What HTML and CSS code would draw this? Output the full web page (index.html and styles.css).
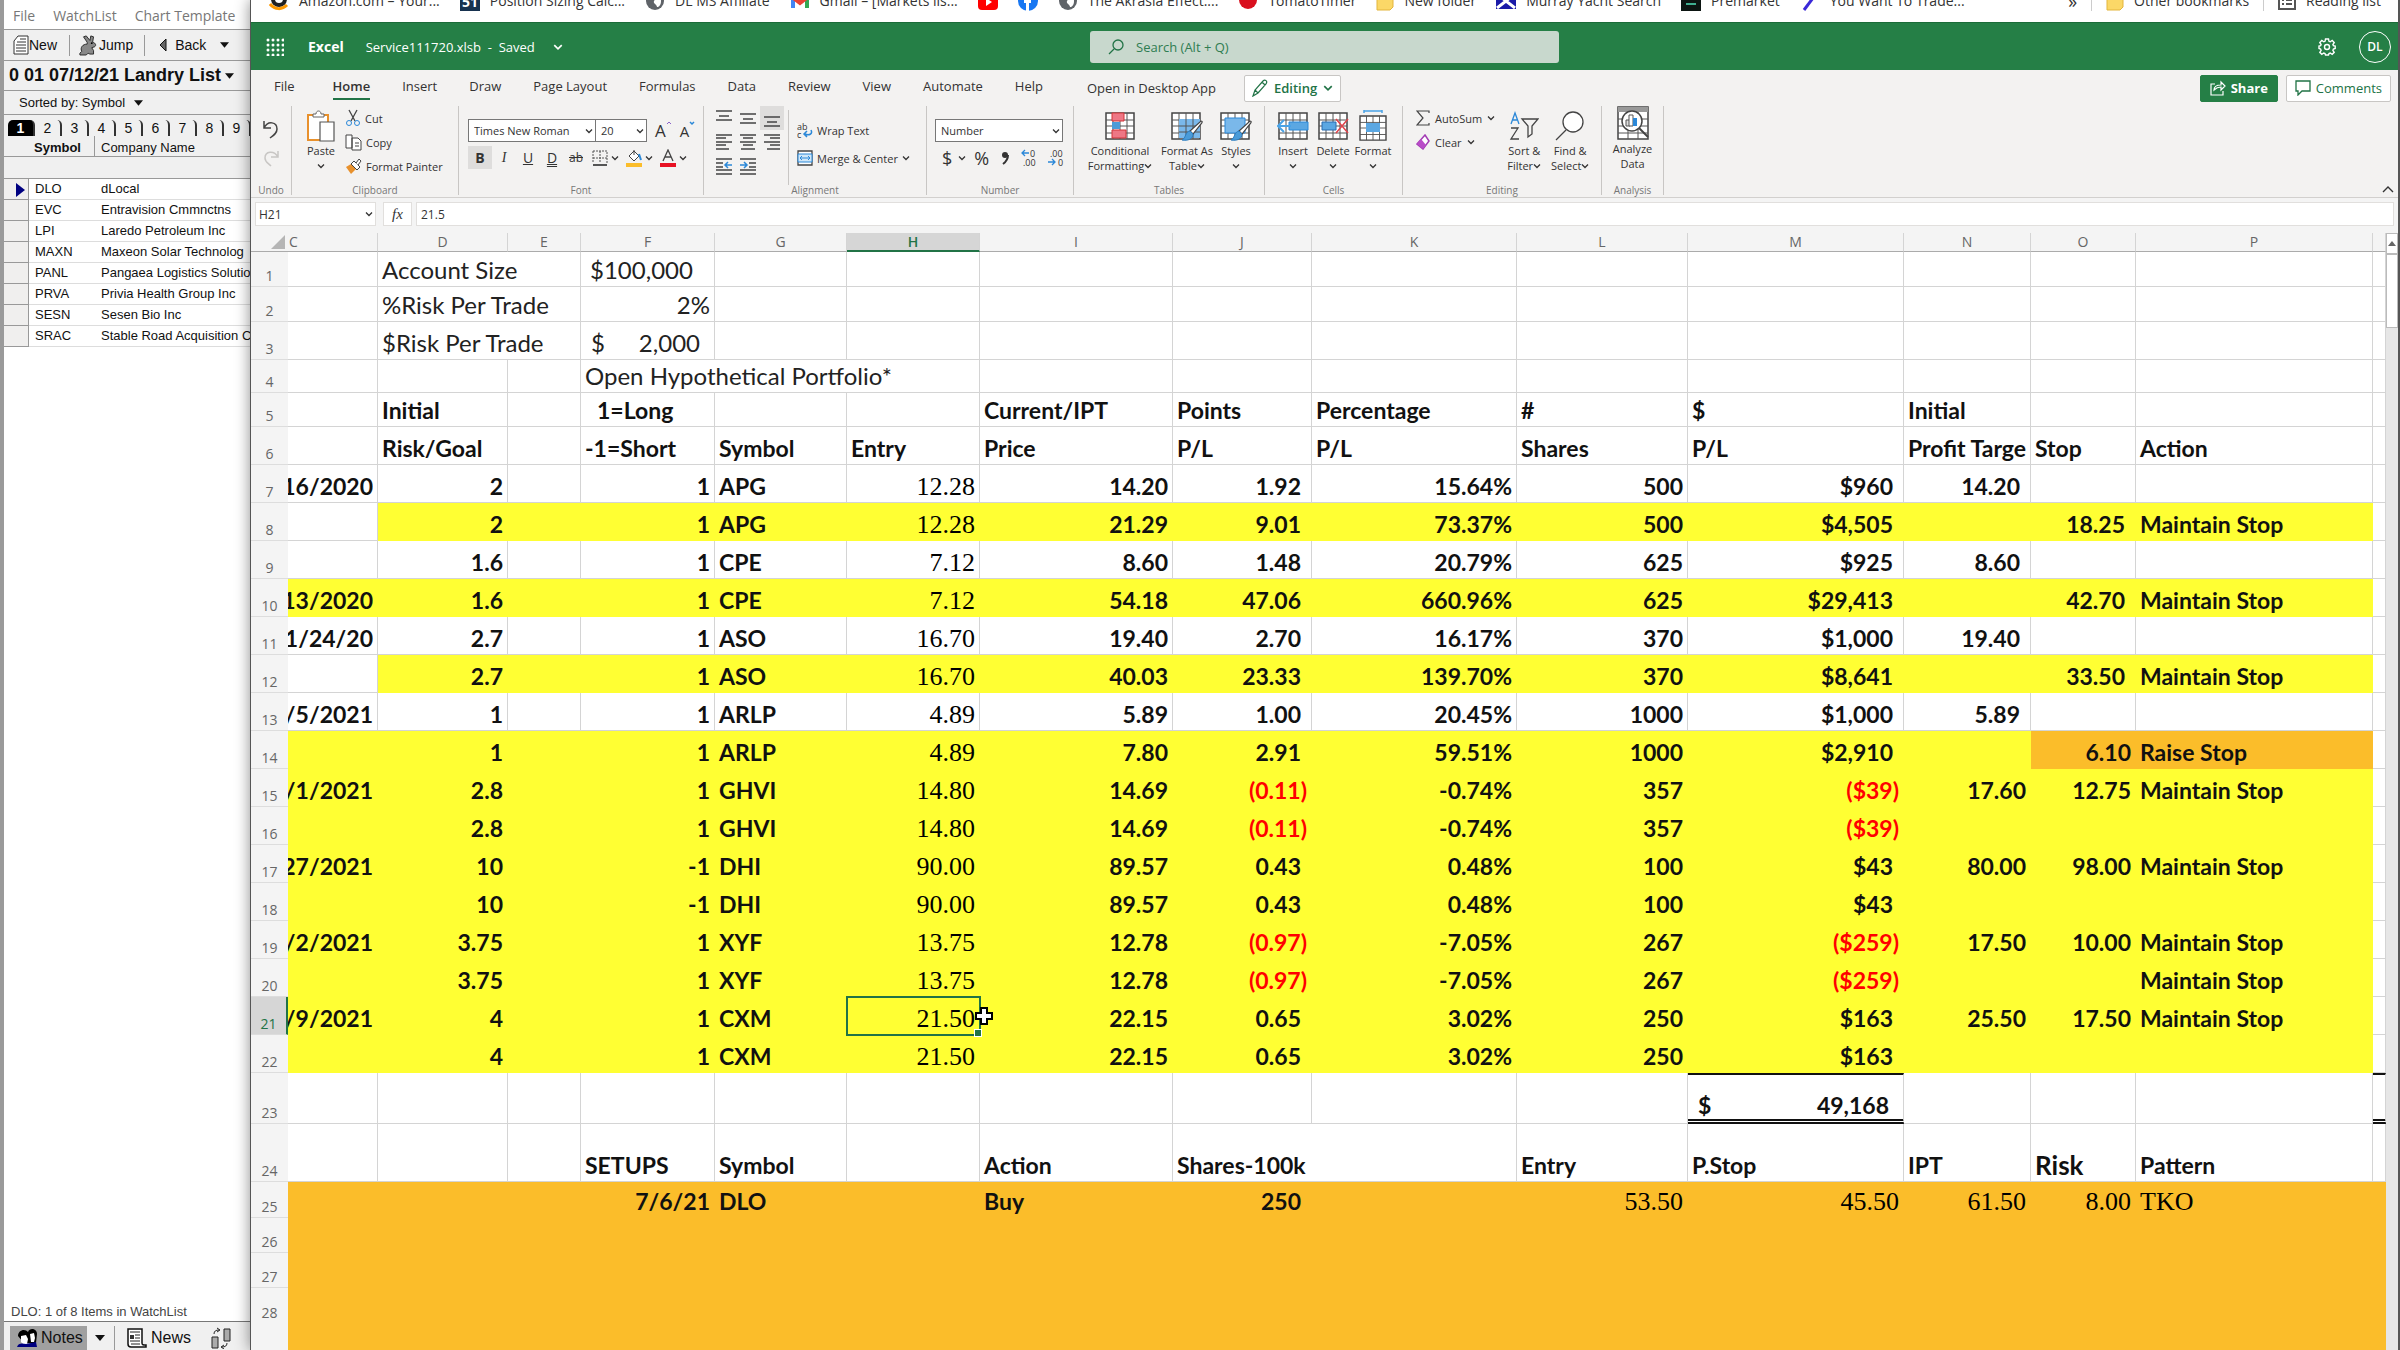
FILE: index.html
```html
<!DOCTYPE html>
<html lang="en">
<head>
  <meta charset="UTF-8" />
  <meta name="viewport" content="width=device-width, initial-scale=1.0"/>
  <title>Service111720.xlsb - Excel</title>
  <link rel="stylesheet" href="styles.css">
</head>
<body>

  <!-- shared icons -->
  <svg class="defs" aria-hidden="true">
    <symbol id="chev" viewBox="0 0 8 8"><path d="M1 2.500l3 3 3-3" fill="none" stroke="currentColor" stroke-width="1.300"/></symbol>
    <symbol id="tri" viewBox="0 0 10 6"><path d="M0 0h10L5 6z" fill="currentColor"/></symbol>
    <symbol id="globe" viewBox="0 0 20 20"><circle cx="10" cy="10" r="9" fill="#5f6368"/><path d="M10 3c4 0 6 3 6 7s-2 6-4 6c0-3-4-3-3-6 2-2-2-3 1-7z" fill="#fff"/></symbol>
    <symbol id="folder" viewBox="0 0 18 20"><path d="M1 2h7l2 3h7v11l-3 3H1z" fill="#fbd867" stroke="#e3b53c"/></symbol>
    <symbol id="grid" viewBox="0 0 30 28"><path d="M1 1h28v26H1z" fill="#fff" stroke="#444" stroke-width="1.500"/><path d="M1 8h28M1 14h28M1 21h28M8 1v26M15 1v26M22 1v26" stroke="#555" fill="none"/></symbol>
    <symbol id="brush" viewBox="0 0 22 22"><path d="M20 1c2 0 1 2 0 3l-8 10-3-3z" fill="#fff" stroke="#444" stroke-width="1.200"/><path d="M9 11l3 3c0 5-5 7-11 6 4-2 3-8 8-9z" fill="#4a9bd8" stroke="#2b7cbf"/></symbol>
  </svg>

  <aside class="watch">
    <nav class="watch-menu">
      <a href="#">File</a>
      <a href="#">WatchList</a>
      <a href="#">Chart Template</a>
    </nav>
    <div class="watch-tools">
      <button>
        <svg width="16" height="20" viewBox="0 0 16 20"><path d="M5 1h10v18H1V6z" fill="#fff" stroke="#333"/><path d="M4 7h9M3 10h10M3 13h10M3 16h10M7 4h6" stroke="#333"/></svg>New
      </button>
      <button class="jump">
        <svg width="20" height="22" viewBox="0 0 22 22"><path d="M9 8L5 2l3-1 4 5 1-5 3 1-1 6c4 1 4 4 2 5l-3 1 2 3v4h-4l-2-1-2 2H1v-2l2-2c-2-4 1-8 6-8z" fill="#888" stroke="#222"/><circle cx="14" cy="9" r="1"/></svg>Jump
      </button>
      <button class="back">
        <svg width="8" height="14" viewBox="0 0 8 14"><path d="M7 1v12L1 7z" fill="#666" stroke="#111"/></svg>Back
        <svg class="drop" width="9" height="6"><use href="#tri"/></svg>
      </button>
    </div>
    <button class="watch-title">0 01 07/12/21 Landry List <svg width="9" height="6"><use href="#tri"/></svg></button>
    <button class="watch-sort">Sorted by: Symbol <svg width="9" height="6"><use href="#tri"/></svg></button>
    <div class="watch-tabs">
      <button class="on">1</button><button>2</button><button>3</button><button>4</button><button>5</button><button>6</button><button>7</button><button>8</button><button>9</button>
    </div>
    <table class="watch-list">
      <thead>
        <tr><th></th><th class="sym">Symbol</th><th>Company Name</th></tr>
        <tr class="blank"><td colspan="3"></td></tr>
      </thead>
      <tbody>
        <tr><td class="cur"><svg width="9" height="14" viewBox="0 0 9 14"><path d="M0 0l9 7-9 7z" fill="#000080"/></svg></td><td>DLO</td><td>dLocal</td></tr>
        <tr><td></td><td>EVC</td><td>Entravision Cmmnctns</td></tr>
        <tr><td></td><td>LPI</td><td>Laredo Petroleum Inc</td></tr>
        <tr><td></td><td>MAXN</td><td>Maxeon Solar Technolog</td></tr>
        <tr><td></td><td>PANL</td><td>Pangaea Logistics Solutio</td></tr>
        <tr><td></td><td>PRVA</td><td>Privia Health Group Inc</td></tr>
        <tr><td></td><td>SESN</td><td>Sesen Bio Inc</td></tr>
        <tr><td></td><td>SRAC</td><td>Stable Road Acquisition C</td></tr>
      </tbody>
    </table>
    <p class="watch-status">DLO: 1 of 8 Items in WatchList</p>
    <div class="watch-foot">
      <button class="notes">
        <svg width="22" height="20" viewBox="0 0 22 20"><path d="M2 8c0-6 7-8 10-4 2-5 9-3 9 2l-1 9H8z" fill="#000"/><path d="M5 8l5-1 2 4-1 5H7l-2-2zM14 6l4-1 1 5-1 4h-3z" fill="#fff"/><path d="M1 19c1-4 5-4 9-3l10-2 1 5z" fill="#000080"/></svg>Notes
      </button>
      <button class="more" aria-label="More notes"><svg width="10" height="6"><use href="#tri"/></svg></button>
      <button class="news">
        <svg width="20" height="20" viewBox="0 0 20 20"><path d="M1 1h14v14c0 2 1 2 4 2v2H4c-2 0-3-1-3-3z" fill="#fff" stroke="#111" stroke-width="1.500"/><path d="M3 4h10M8 7h5M8 10h5M3 13h10M4 16h9" stroke="#222"/><path d="M3 7h4v4H3z" fill="#333"/></svg>News
      </button>
      <button class="link" aria-label="Link">
        <svg width="20" height="22" viewBox="0 0 20 22"><path d="M1 10h6v11H1zM13 2h6v12h-6z" fill="#aaa" stroke="#222" /><path d="M3 7c0-3 2-4 5-4M6 1l3 2-3 2M16 16c0 3-2 4-5 4M13 18l-3 2 3 2" fill="none" stroke="#222"/></svg>
      </button>
    </div>
  </aside>

  <main class="excel">
    <nav class="bookmarks">
      <a href="#"><svg width="20" height="20" viewBox="0 0 20 20"><circle cx="10" cy="8" r="8" fill="#222"/><circle cx="10" cy="8" r="4" fill="#fff"/><path d="M1 13c5 6 12 6 17 1" fill="none" stroke="#f90" stroke-width="3"/></svg>Amazon.com – Your...</a>
      <a href="#"><svg width="20" height="20" viewBox="0 0 20 20"><path d="M0 0h20v20H0z" fill="#17324f"/><text x="2" y="16" class="logo51">51</text></svg>Position Sizing Calc...</a>
      <a href="#"><svg width="20" height="20"><use href="#globe"/></svg>DL MS Affiliate</a>
      <a href="#"><svg width="20" height="16" viewBox="0 0 20 16"><path d="M1 3h4v12H1z" fill="#4285f4"/><path d="M15 3h4v12h-4z" fill="#34a853"/><path d="M1 3l9 7 9-7" fill="none" stroke="#ea4335" stroke-width="4"/></svg>Gmail – [Markets lis...</a>
      <a href="#" aria-label="YouTube"><svg width="20" height="18" viewBox="0 0 20 18"><rect width="20" height="16" rx="4" y="1" fill="#f00"/><path d="M8 5l6 4-6 4z" fill="#fff"/></svg></a>
      <a href="#" aria-label="Facebook"><svg width="20" height="20" viewBox="0 0 20 20"><circle cx="10" cy="10" r="10" fill="#1877f2"/><path d="M8 20v-8H6V9h2c0-4 1-5 5-5v3c-2 0-2 0-2 2h2v3h-2v8z" fill="#fff"/></svg></a>
      <a href="#"><svg width="20" height="20"><use href="#globe"/></svg>The Akrasia Effect:...</a>
      <a href="#"><svg width="20" height="20" viewBox="0 0 20 20"><circle cx="10" cy="9" r="9" fill="#d9101e"/></svg>TomatoTimer</a>
      <a href="#"><svg width="18" height="20"><use href="#folder"/></svg>New folder</a>
      <a href="#"><svg width="20" height="16" viewBox="0 0 20 16"><path d="M0 0h20v16H0z" fill="#1a1aa8"/><path d="M1 15l9-7 9 7M1 1l9 7 9-7" fill="none" stroke="#fff" stroke-width="3"/></svg>Murray Yacht Search</a>
      <a href="#"><svg width="20" height="20" viewBox="0 0 20 20"><path d="M0 0h20v20H0z" fill="#0c1512"/><path d="M5 13h10" stroke="#3fae90" stroke-width="2"/></svg>Premarket</a>
      <a href="#"><svg width="20" height="20" viewBox="0 0 20 20"><path d="M4 19L13 7" stroke="#3a28d8" stroke-width="3"/></svg>You Want To Trade...</a>
      <a href="#" class="overflow">»</a>
      <a href="#" class="sep"><svg width="18" height="20"><use href="#folder"/></svg>Other bookmarks</a>
      <a href="#" class="sep"><svg width="18" height="18" viewBox="0 0 18 18"><path d="M1 1h16v16H1z" fill="#fff" stroke="#555" stroke-width="2"/><path d="M4 12h2M8 12h6M4 8h2M8 8h6" stroke="#555" stroke-width="2"/></svg>Reading list</a>
    </nav>

    <header class="titlebar">
      <div class="doc">
        <button class="apps" aria-label="App launcher">
          <svg width="18" height="18" viewBox="0 0 18 18" fill="#fff"><circle cx="2" cy="2" r="1.500"/><circle cx="7" cy="2" r="1.500"/><circle cx="12" cy="2" r="1.500"/><circle cx="17" cy="2" r="1.500"/><circle cx="2" cy="7" r="1.500"/><circle cx="7" cy="7" r="1.500"/><circle cx="12" cy="7" r="1.500"/><circle cx="17" cy="7" r="1.500"/><circle cx="2" cy="12" r="1.500"/><circle cx="7" cy="12" r="1.500"/><circle cx="12" cy="12" r="1.500"/><circle cx="17" cy="12" r="1.500"/><circle cx="2" cy="17" r="1.500"/><circle cx="7" cy="17" r="1.500"/><circle cx="12" cy="17" r="1.500"/><circle cx="17" cy="17" r="1.500"/></svg>
        </button>
        <strong>Excel</strong>
        <button class="filename">Service111720.xlsb&nbsp; - &nbsp;Saved <svg width="10" height="10"><use href="#chev"/></svg></button>
      </div>
      <label class="search">
        <svg width="16" height="16" viewBox="0 0 16 16" fill="none" stroke="#217346" stroke-width="1.300"><circle cx="10" cy="6" r="5"/><path d="M6 10l-5 5"/></svg>
        <input type="text" placeholder="Search (Alt + Q)" aria-label="Search">
      </label>
      <div class="account">
        <button aria-label="Settings">
          <svg width="18" height="18" viewBox="0 0 18 18" fill="none" stroke="#fff" stroke-width="1.400"><path d="M7.500 1h3l.5 2.300 1.200.5 2-1.300 2 2-1.300 2 .5 1.200 1.800.3v2.500l-1.800.5-.5 1.300 1.300 2-2 2-2-1.300-1.200.5L10.500 17h-3L7 15.500 5.800 15l-2 1.300-2-2 1.300-2-.5-1.300L1 10.500V8l1.600-.3.5-1.200-1.300-2 2-2 2 1.300L7 3.300z"/><circle cx="9" cy="9" r="2.500"/></svg>
        </button>
        <button class="avatar">DL</button>
      </div>
    </header>

    <nav class="tabs">
      <a href="#" class="file">File</a>
      <a href="#" class="active">Home</a>
      <a href="#">Insert</a>
      <a href="#">Draw</a>
      <a href="#">Page Layout</a>
      <a href="#">Formulas</a>
      <a href="#">Data</a>
      <a href="#">Review</a>
      <a href="#">View</a>
      <a href="#">Automate</a>
      <a href="#">Help</a>
      <a href="#" class="desktop">Open in Desktop App</a>
      <button class="mode"><svg width="16" height="18" viewBox="0 0 16 18" fill="none" stroke="#217346" stroke-width="1.200"><path d="M1 17l2-6 8-9c2-2 5 0 3 3l-8 9zM3 11l3 3M10 3l3 3"/></svg>Editing <svg width="10" height="10"><use href="#chev"/></svg></button>
      <div class="tab-actions">
        <button class="share"><svg width="16" height="16" viewBox="0 0 16 16" fill="none" stroke="#fff" stroke-width="1.200"><path d="M5 4H1v11h12v-4M4 10c0-4 3-5 7-5V2l4 4-4 4V7c-4 0-5 1-7 3z"/></svg>Share</button>
        <button class="comments"><svg width="16" height="16" viewBox="0 0 16 16" fill="none" stroke="#217346" stroke-width="1.300"><path d="M1 1h14v10H7l-4 4v-4H1z"/></svg>Comments</button>
      </div>
    </nav>

    <section class="ribbon">
      <div class="group g-undo">
        <div class="body col">
          <button aria-label="Undo"><svg width="16" height="20" viewBox="0 0 16 20" fill="none" stroke="#444" stroke-width="1.500"><path d="M1 2v7h7M1 9c4-8 13-6 13 1 0 4-3 6-7 9"/></svg></button>
          <button aria-label="Redo"><svg width="16" height="18" viewBox="0 0 16 18" fill="none" stroke="#c8c6c4" stroke-width="1.500"><path d="M15 2v6H8M15 8C11 1 2 2 2 9c0 4 3 5 6 8"/></svg></button>
        </div>
        <span class="name">Undo</span>
      </div>

      <div class="group g-clip">
        <div class="body">
          <button class="big">
            <svg width="30" height="32" viewBox="0 0 30 32"><path d="M2 5h20v25H2z" fill="#fff" stroke="#e8912d" stroke-width="2"/><path d="M7 7V4h3c0-4 5-4 5 0h3v3z" fill="#fff" stroke="#666"/><path d="M14 12h14v19H14z" fill="#fff" stroke="#555" stroke-width="1.200"/></svg>
            Paste<svg width="8" height="8"><use href="#chev"/></svg>
          </button>
          <div class="list">
            <button><svg width="16" height="18" viewBox="0 0 16 18" fill="none"><path d="M4 1l6 11M12 1L6 12" stroke="#444" stroke-width="1.300"/><circle cx="4" cy="14" r="2.500" stroke="#2b88d8"/><circle cx="12" cy="14" r="2.500" stroke="#2b88d8"/></svg>Cut</button>
            <button><svg width="17" height="17" viewBox="0 0 17 17" fill="#fff" stroke="#444"><path d="M1 1h6v13H1zM7 4h6l3 3v9H7zM10 9h4M10 12h4"/></svg>Copy</button>
            <button><svg width="17" height="17" viewBox="0 0 17 17"><path d="M1 9l5-3 5 5-5 5z" fill="#e8912d"/><path d="M6 6l3-3 6 6-3 3z" fill="#fff" stroke="#444"/><path d="M11 5l3-4 2 2-3 4" fill="#fff" stroke="#444"/></svg>Format Painter</button>
          </div>
        </div>
        <span class="name">Clipboard</span>
      </div>

      <div class="group g-font">
        <div class="body col">
          <div class="line">
            <span class="pick font"><select aria-label="Font"><option>Times New Roman</option></select><svg width="8" height="8"><use href="#chev"/></svg></span>
            <span class="pick size"><select aria-label="Font size"><option>20</option></select><svg width="8" height="8"><use href="#chev"/></svg></span>
            <button class="grow">A<svg width="6" height="6" viewBox="0 0 6 6"><path d="M1 4l2-2 2 2" fill="none" stroke="#8a63c9"/></svg></button>
            <button class="shrink">A<svg width="6" height="6" viewBox="0 0 6 6"><path d="M1 2l2 2 2-2" fill="none" stroke="#2b88d8" stroke-width="1.500"/></svg></button>
          </div>
          <div class="line marks">
            <button class="bold">B</button>
            <button class="ital">I</button>
            <button class="und">U</button>
            <button class="dund">D</button>
            <button class="strike">ab</button>
            <button aria-label="Borders"><svg width="16" height="16" viewBox="0 0 16 16" fill="none" stroke="#555"><path d="M1 1h14v12M1 1v12M8 1v12M1 8h14" stroke-dasharray="2 1"/><path d="M1 15h14" stroke-width="2"/></svg><svg width="8" height="8"><use href="#chev"/></svg></button>
            <button aria-label="Fill color"><svg width="16" height="18" viewBox="0 0 16 18"><path d="M3 7l5-5 5 5-5 5zM8 1v5" fill="#fff" stroke="#444"/><path d="M13 5l2 6" stroke="#2b88d8" stroke-width="2"/><path d="M0 14h16v4H0z" fill="#fbbd2a"/></svg><svg width="8" height="8"><use href="#chev"/></svg></button>
            <button aria-label="Font color"><svg width="16" height="18" viewBox="0 0 16 18"><path d="M3 12L8 1l5 11M5 8h6" fill="none" stroke="#444" stroke-width="1.300"/><path d="M0 14h16v4H0z" fill="#e81123"/></svg><svg width="8" height="8"><use href="#chev"/></svg></button>
          </div>
        </div>
        <span class="name">Font</span>
      </div>

      <div class="group g-align">
        <div class="body">
          <div class="aligns">
            <button aria-label="Top align"><svg width="16" height="18" viewBox="0 0 16 18" stroke="#444" stroke-width="1.300"><path d="M0 2h16M3 7h10M0 11h16"/></svg></button>
            <button aria-label="Middle align"><svg width="16" height="18" viewBox="0 0 16 18" stroke="#444" stroke-width="1.300"><path d="M0 5h16M3 10h10M0 14h16"/></svg></button>
            <button class="on" aria-label="Bottom align"><svg width="16" height="18" viewBox="0 0 16 18" stroke="#444" stroke-width="1.300"><path d="M0 8h16M3 13h10M0 17h16"/></svg></button>
            <button aria-label="Align left"><svg width="16" height="18" viewBox="0 0 16 18" stroke="#444" stroke-width="1.500"><path d="M0 2h16M0 5h10M0 9h16M0 12h10M0 16h13"/></svg></button>
            <button aria-label="Center"><svg width="16" height="18" viewBox="0 0 16 18" stroke="#444" stroke-width="1.500"><path d="M0 2h16M3 5h10M0 9h16M3 12h10M1 16h14"/></svg></button>
            <button aria-label="Align right"><svg width="16" height="18" viewBox="0 0 16 18" stroke="#444" stroke-width="1.500"><path d="M0 2h16M6 5h10M0 9h16M6 12h10M3 16h13"/></svg></button>
            <button aria-label="Decrease indent"><svg width="16" height="18" viewBox="0 0 16 18" stroke="#444" stroke-width="1.500"><path d="M0 2h16M0 6h7M0 10h7M0 13h16M0 17h16"/><path d="M16 8h-6M12 5L9 8l3 3" stroke="#2b88d8" fill="none"/></svg></button>
            <button aria-label="Increase indent"><svg width="16" height="18" viewBox="0 0 16 18" stroke="#444" stroke-width="1.500"><path d="M0 2h16M9 6h7M9 10h7M0 13h16M0 17h16"/><path d="M0 8h6M4 5l3 3-3 3" stroke="#2b88d8" fill="none"/></svg></button>
          </div>
          <div class="list wrap">
            <button><svg width="16" height="18" viewBox="0 0 16 18"><text x="0" y="9" class="tiny">ab</text><text x="0" y="17" class="tiny">c</text><path d="M14 9c2 4-2 6-6 4M10 10l-3 3 3 3" fill="none" stroke="#2b88d8" stroke-width="1.500"/></svg>Wrap Text</button>
            <button><svg width="16" height="16" viewBox="0 0 16 16"><path d="M1 1h14v14H1z" fill="#fff" stroke="#444" stroke-width="1.300"/><path d="M1 4h14v8H1z" fill="#d0e7f8" stroke="#2b88d8"/><path d="M3 8h10M5 6L3 8l2 2M11 6l2 2-2 2" stroke="#2b88d8" fill="none"/></svg>Merge &amp; Center <svg width="8" height="8"><use href="#chev"/></svg></button>
          </div>
        </div>
        <span class="name">Alignment</span>
      </div>

      <div class="group g-num">
        <div class="body col">
          <div class="line">
            <span class="pick number"><select aria-label="Number format"><option>Number</option></select><svg width="8" height="8"><use href="#chev"/></svg></span>
          </div>
          <div class="line nums">
            <button>$<svg width="8" height="8"><use href="#chev"/></svg></button>
            <button>%</button>
            <button class="comma" aria-label="Comma style"><svg width="8" height="16" viewBox="0 0 8 16"><circle cx="4" cy="5" r="3" fill="#333"/><path d="M7 5c0 4-1 6-5 9" fill="none" stroke="#333" stroke-width="2"/></svg></button>
            <button aria-label="Increase decimal"><svg width="18" height="18" viewBox="0 0 18 18"><text x="9" y="8" class="tiny">0</text><text x="2" y="17" class="tiny">.00</text><path d="M8 4H1M4 1L1 4l3 3" fill="none" stroke="#2b88d8" stroke-width="1.300"/></svg></button>
            <button aria-label="Decrease decimal"><svg width="18" height="18" viewBox="0 0 18 18"><text x="3" y="8" class="tiny">.00</text><text x="11" y="17" class="tiny">0</text><path d="M1 13h7M5 10l3 3-3 3" fill="none" stroke="#2b88d8" stroke-width="1.300"/></svg></button>
          </div>
        </div>
        <span class="name">Number</span>
      </div>

      <div class="group g-tables">
        <div class="body">
          <button class="big w80"><svg width="30" height="32" viewBox="0 0 30 32"><use href="#grid" width="30" height="28" y="2"/><path d="M7 3h12v8H7zM7 20h14v8H7z" fill="#ee7785" stroke="#d13438"/><path d="M7 12h8v7H7z" fill="#4a9bd8"/></svg>Conditional<span>Formatting<svg width="8" height="8"><use href="#chev"/></svg></span></button>
          <button class="big w54"><svg width="32" height="32" viewBox="0 0 32 32"><use href="#grid" width="30" height="28" y="2"/><path d="M8 9h21v19H8z" fill="#7ab8ea"/><path d="M8 16h21M8 22h21M15 9v19M22 9v19" stroke="#555"/><use href="#brush" width="22" height="22" x="10" y="10"/></svg>Format As<span>Table<svg width="8" height="8"><use href="#chev"/></svg></span></button>
          <button class="big w42"><svg width="32" height="32" viewBox="0 0 32 32"><use href="#grid" width="30" height="28" y="2"/><path d="M5 8h20v15H5z" fill="#7ab8ea" stroke="#2b88d8"/><use href="#brush" width="22" height="22" x="10" y="10"/></svg>Styles<svg width="8" height="8"><use href="#chev"/></svg></button>
        </div>
        <span class="name">Tables</span>
      </div>

      <div class="group g-cells">
        <div class="body">
          <button class="big w40"><svg width="32" height="32" viewBox="0 0 32 32"><use href="#grid" width="30" height="28" x="1" y="2"/><path d="M12 12h19v8H12z" fill="#5ba7e2" stroke="#2b88d8"/><path d="M14 16H1M7 10l-6 6 6 6" fill="none" stroke="#4aa3e6" stroke-width="2"/></svg>Insert<svg width="8" height="8"><use href="#chev"/></svg></button>
          <button class="big w40"><svg width="32" height="32" viewBox="0 0 32 32"><use href="#grid" width="30" height="28" x="1" y="2"/><path d="M5 12h14v8H5z" fill="#5ba7e2" stroke="#2b6cb0"/><path d="M19 9l12 14M31 9L19 23" stroke="#e0434b" stroke-width="1.500"/></svg>Delete<svg width="8" height="8"><use href="#chev"/></svg></button>
          <button class="big w40"><svg width="32" height="32" viewBox="0 0 32 32"><use href="#grid" width="30" height="26" x="1" y="5"/><path d="M9 13h14v9H9z" fill="#5ba7e2"/><path d="M7 1h18M7 0v3M25 0v3" stroke="#4aa3e6" stroke-width="1.500"/></svg>Format<svg width="8" height="8"><use href="#chev"/></svg></button>
        </div>
        <span class="name">Cells</span>
      </div>

      <div class="group g-edit">
        <div class="body">
          <div class="list">
            <button><svg width="14" height="16" viewBox="0 0 14 16"><path d="M13 3V1H1l6 7-6 7h12v-2" fill="none" stroke="#444" stroke-width="1.200"/></svg>AutoSum <svg width="8" height="8"><use href="#chev"/></svg></button>
            <button><svg width="14" height="16" viewBox="0 0 14 16"><path d="M9 1l4 6-6 8-6-5z" fill="#fff" stroke="#a33cb4" stroke-width="1.500"/><path d="M5 5l5 6-3 4-6-5z" fill="#b94cc8"/></svg>Clear <svg width="8" height="8"><use href="#chev"/></svg></button>
          </div>
          <button class="big w46"><svg width="30" height="32" viewBox="0 0 30 32" fill="none" stroke-width="1.300"><path d="M2 14L6 3l4 11M4 10h4" stroke="#2b88d8"/><path d="M2 18h7L2 29h8M13 9h16l-6 7v8l-4 3V16z" stroke="#444"/></svg>Sort &amp;<span>Filter<svg width="8" height="8"><use href="#chev"/></svg></span></button>
          <button class="big w46"><svg width="30" height="32" viewBox="0 0 30 32" fill="#fff" stroke="#444" stroke-width="1.300"><circle cx="18" cy="12" r="10"/><path d="M11 20L1 30"/></svg>Find &amp;<span>Select<svg width="8" height="8"><use href="#chev"/></svg></span></button>
        </div>
        <span class="name">Editing</span>
      </div>

      <div class="group g-analysis">
        <div class="body">
          <button class="big analyze"><svg width="32" height="34" viewBox="0 0 32 34"><path d="M1 1h30v32H1z" fill="#fff" stroke="#444" stroke-width="1.500"/><path d="M1 1h30v5H1z" fill="#999"/><path d="M1 13h30M1 20h30M1 27h30M11 6v27M21 6v27" stroke="#555"/><circle cx="15" cy="15" r="10" fill="#fff" stroke="#444" stroke-width="1.500"/><path d="M22 22l9 9" stroke="#444" stroke-width="2"/><path d="M9 14h4v6H9z" fill="#ddd" stroke="#555"/><path d="M12 9h4v11h-4z" fill="#fff" stroke="#555"/><path d="M16 12h4v8h-4z" fill="#2b88d8"/></svg>Analyze<span>Data</span></button>
        </div>
        <span class="name">Analysis</span>
      </div>
      <button class="collapse" aria-label="Collapse ribbon"><svg width="12" height="8" viewBox="0 0 12 8"><path d="M1 7l5-5 5 5" fill="none" stroke="#333" stroke-width="1.400"/></svg></button>
    </section>

    <div class="formula">
      <span class="namebox"><input type="text" value="H21" aria-label="Name box"><svg width="8" height="8"><use href="#chev"/></svg></span>
      <button class="fx">fx</button>
      <input class="fbar" type="text" value="21.5" aria-label="Formula bar">
    </div>

    <div class="sheet-wrap">
      <table class="sheet">
        <colgroup>
          <col class="c-row"><col class="c-c"><col class="c-d"><col class="c-e"><col class="c-f"><col class="c-g"><col class="c-h"><col class="c-i"><col class="c-j"><col class="c-k"><col class="c-l"><col class="c-m"><col class="c-n"><col class="c-o"><col class="c-p"><col>
        </colgroup>
        <thead>
          <tr><th class="corner"><svg width="14" height="14" viewBox="0 0 14 14"><path d="M14 0v14H0z" fill="#b5b5b5"/></svg></th><th class="cut">C</th><th>D</th><th>E</th><th>F</th><th>G</th><th class="sel">H</th><th>I</th><th>J</th><th>K</th><th>L</th><th>M</th><th>N</th><th>O</th><th>P</th><th></th></tr>
        </thead>
        <tbody class="top">
          <tr><th>1</th><td></td><td colspan="2">Account Size</td><td class="in10">$100,000</td><td></td><td></td><td></td><td></td><td></td><td></td><td></td><td></td><td></td><td></td><td></td></tr>
          <tr><th>2</th><td></td><td colspan="2">%Risk Per Trade</td><td class="r">2%</td><td></td><td></td><td></td><td></td><td></td><td></td><td></td><td></td><td></td><td></td><td></td></tr>
          <tr class="h38"><th>3</th><td></td><td colspan="2">$Risk Per Trade</td><td><span class="money">$<span>2,000</span></span></td><td></td><td></td><td></td><td></td><td></td><td></td><td></td><td></td><td></td><td></td><td></td></tr>
          <tr class="h33"><th>4</th><td></td><td></td><td></td><td colspan="3">Open Hypothetical Portfolio*</td><td></td><td></td><td></td><td></td><td></td><td></td><td></td><td></td><td></td></tr>
        </tbody>
        <tbody class="heads">
          <tr class="h34"><th>5</th><td></td><td>Initial</td><td></td><td class="in17">1=Long</td><td></td><td></td><td>Current/IPT</td><td>Points</td><td>Percentage</td><td>#</td><td>$</td><td>Initial</td><td></td><td></td><td></td></tr>
          <tr class="h38"><th>6</th><td></td><td>Risk/Goal</td><td></td><td>-1=Short</td><td>Symbol</td><td>Entry</td><td>Price</td><td>P/L</td><td>P/L</td><td>Shares</td><td>P/L</td><td>Profit Targe</td><td>Stop</td><td>Action</td><td></td></tr>
        </tbody>
        <tbody class="trades">
          <tr class="ipt"><th>7</th><td><span class="clip">16/2020</span></td><td>2</td><td></td><td>1</td><td>APG</td><td>12.28</td><td>14.20</td><td>1.92</td><td>15.64%</td><td>500</td><td>$960</td><td>14.20</td><td></td><td></td><td></td></tr>
          <tr class="open nodate"><th>8</th><td></td><td>2</td><td></td><td>1</td><td>APG</td><td>12.28</td><td>21.29</td><td>9.01</td><td>73.37%</td><td>500</td><td>$4,505</td><td></td><td class="in11">18.25</td><td>Maintain Stop</td><td></td></tr>
          <tr class="ipt"><th>9</th><td></td><td>1.6</td><td></td><td>1</td><td>CPE</td><td>7.12</td><td>8.60</td><td>1.48</td><td>20.79%</td><td>625</td><td>$925</td><td>8.60</td><td></td><td></td><td></td></tr>
          <tr class="open"><th>10</th><td><span class="clip">13/2020</span></td><td>1.6</td><td></td><td>1</td><td>CPE</td><td>7.12</td><td>54.18</td><td>47.06</td><td>660.96%</td><td>625</td><td>$29,413</td><td></td><td class="in11">42.70</td><td>Maintain Stop</td><td></td></tr>
          <tr class="ipt"><th>11</th><td><span class="clip">1/24/20</span></td><td>2.7</td><td></td><td>1</td><td>ASO</td><td>16.70</td><td>19.40</td><td>2.70</td><td>16.17%</td><td>370</td><td>$1,000</td><td>19.40</td><td></td><td></td><td></td></tr>
          <tr class="open nodate"><th>12</th><td></td><td>2.7</td><td></td><td>1</td><td>ASO</td><td>16.70</td><td>40.03</td><td>23.33</td><td>139.70%</td><td>370</td><td>$8,641</td><td></td><td class="in11">33.50</td><td>Maintain Stop</td><td></td></tr>
          <tr class="ipt"><th>13</th><td><span class="clip">/5/2021</span></td><td>1</td><td></td><td>1</td><td>ARLP</td><td>4.89</td><td>5.89</td><td>1.00</td><td>20.45%</td><td>1000</td><td>$1,000</td><td>5.89</td><td></td><td></td><td></td></tr>
          <tr class="open"><th>14</th><td></td><td>1</td><td></td><td>1</td><td>ARLP</td><td>4.89</td><td>7.80</td><td>2.91</td><td>59.51%</td><td>1000</td><td>$2,910</td><td></td><td class="raise">6.10</td><td class="raise">Raise Stop</td><td></td></tr>
          <tr class="open"><th>15</th><td><span class="clip">/1/2021</span></td><td>2.8</td><td></td><td>1</td><td>GHVI</td><td>14.80</td><td>14.69</td><td class="neg">(0.11)</td><td>-0.74%</td><td>357</td><td class="neg">($39)</td><td>17.60</td><td>12.75</td><td>Maintain Stop</td><td></td></tr>
          <tr class="open"><th>16</th><td></td><td>2.8</td><td></td><td>1</td><td>GHVI</td><td>14.80</td><td>14.69</td><td class="neg">(0.11)</td><td>-0.74%</td><td>357</td><td class="neg">($39)</td><td></td><td></td><td></td><td></td></tr>
          <tr class="open"><th>17</th><td><span class="clip">27/2021</span></td><td>10</td><td></td><td>-1</td><td>DHI</td><td>90.00</td><td>89.57</td><td>0.43</td><td>0.48%</td><td>100</td><td>$43</td><td>80.00</td><td>98.00</td><td>Maintain Stop</td><td></td></tr>
          <tr class="open"><th>18</th><td></td><td>10</td><td></td><td>-1</td><td>DHI</td><td>90.00</td><td>89.57</td><td>0.43</td><td>0.48%</td><td>100</td><td>$43</td><td></td><td></td><td></td><td></td></tr>
          <tr class="open"><th>19</th><td><span class="clip">/2/2021</span></td><td>3.75</td><td></td><td>1</td><td>XYF</td><td>13.75</td><td>12.78</td><td class="neg">(0.97)</td><td>-7.05%</td><td>267</td><td class="neg">($259)</td><td>17.50</td><td>10.00</td><td>Maintain Stop</td><td></td></tr>
          <tr class="open"><th>20</th><td></td><td>3.75</td><td></td><td>1</td><td>XYF</td><td>13.75</td><td>12.78</td><td class="neg">(0.97)</td><td>-7.05%</td><td>267</td><td class="neg">($259)</td><td></td><td></td><td>Maintain Stop</td><td></td></tr>
          <tr class="open"><th class="sel">21</th><td><span class="clip">/9/2021</span></td><td>4</td><td></td><td>1</td><td>CXM</td><td class="active-cell">21.50<svg class="cursor" width="20" height="20" viewBox="0 0 20 20"><path d="M7 2h6v5h5v6h-5v5H7v-5H2V7h5z" fill="#fff" stroke="#000" stroke-width="2"/></svg></td><td>22.15</td><td>0.65</td><td>3.02%</td><td>250</td><td>$163</td><td>25.50</td><td>17.50</td><td>Maintain Stop</td><td></td></tr>
          <tr class="open"><th>22</th><td></td><td>4</td><td></td><td>1</td><td>CXM</td><td>21.50</td><td>22.15</td><td>0.65</td><td>3.02%</td><td>250</td><td>$163</td><td></td><td></td><td></td><td></td></tr>
        </tbody>
        <tbody class="heads">
          <tr class="h51"><th>23</th><td></td><td></td><td></td><td></td><td></td><td></td><td></td><td></td><td></td><td></td><td class="total"><span class="money">$<span>49,168</span></span></td><td></td><td></td><td></td><td class="total"></td></tr>
          <tr class="h58"><th>24</th><td></td><td></td><td></td><td>SETUPS</td><td>Symbol</td><td></td><td>Action</td><td colspan="2">Shares-100k</td><td>Entry</td><td>P.Stop</td><td>IPT</td><td class="larger">Risk</td><td>Pattern</td><td></td></tr>
        </tbody>
        <tbody class="setups">
          <tr class="h36"><th>25</th><td></td><td></td><td></td><td class="r">7/6/21</td><td>DLO</td><td></td><td>Buy</td><td class="r in11">250</td><td></td><td class="r serif">53.50</td><td class="r serif">45.50</td><td class="r serif">61.50</td><td class="r serif">8.00</td><td class="serif">TKO</td><td></td></tr>
          <tr><th>26</th><td colspan="15"></td></tr>
          <tr><th>27</th><td colspan="15"></td></tr>
          <tr><th class="last">28</th><td colspan="15"></td></tr>
          <tr><th class="last"></th><td colspan="15"></td></tr>
        </tbody>
      </table>
      <div class="scroll">
        <button aria-label="Scroll up"><svg width="8" height="5" viewBox="0 0 8 5"><path d="M0 5h8L4 0z" fill="#666"/></svg></button>
        <div class="thumb"></div>
      </div>
    </div>
  </main>

</body>
</html>
```
FILE: styles.css
```css
* {
  box-sizing: border-box;
}

body {
  margin: 0;
  height: 100vh;
  display: flex;
  overflow: hidden;
  font-family: "Open Sans", "Noto Sans", sans-serif;
  font-size: 13px;
  color: #333;
  background: #555;
}

a {
  color: inherit;
  text-decoration: none;
}

button {
  font: inherit;
  color: inherit;
  background: none;
  border: none;
  padding: 0;
  display: flex;
  align-items: center;
  white-space: nowrap;
}

input, select {
  font: inherit;
  color: inherit;
  border: none;
  background: none;
  padding: 0;
  min-width: 0;
}

svg {
  flex: none;
}

.defs {
  position: absolute;
  width: 0;
  height: 0;
}

/* watchlist window */
.watch {
  width: 250px;
  flex: none;
  display: flex;
  flex-direction: column;
  overflow: hidden;
  background: #fff;
  border-left: 4px solid #9a9a9a;
  font-family: "Liberation Sans", Arial, sans-serif;
  color: #111;
}

.watch-menu {
  height: 30px;
  padding: 0 9px 1px;
  display: flex;
  align-items: flex-end;
  gap: 18px;
  font-family: "Open Sans", sans-serif;
  font-size: 14px;
  line-height: 24px;
  color: #777;
  border-bottom: 1px solid #999;
}

.watch-tools {
  height: 31px;
  display: flex;
  align-items: center;
  background: #f0f0f0;
  border-bottom: 1px solid #999;
  font-size: 14px;
  padding-left: 9px;
}

.watch-tools button {
  height: 21px;
}

.watch-tools .jump {
  margin-left: 12px;
  padding-left: 9px;
  border-left: 1px solid #999;
}

.watch-tools .back {
  margin-left: 11px;
  padding-left: 14px;
  border-left: 1px solid #999;
  gap: 8px;
}

.watch-tools .drop {
  margin-left: 6px;
}

.watch-title {
  height: 30px;
  padding-left: 5px;
  gap: 4px;
  font-size: 18px;
  font-weight: bold;
  background: #f0f0f0;
  border-bottom: 1px solid #999;
}

.watch-sort {
  height: 24px;
  padding-left: 15px;
  gap: 9px;
  background: #f0f0f0;
  border-bottom: 1px solid #999;
}

.watch-tabs {
  height: 21px;
  display: flex;
  align-items: flex-end;
  background: #f0f0f0;
  padding-left: 4px;
}

.watch-tabs button {
  width: 27px;
  height: 16px;
  justify-content: center;
  flex: none;
  font-size: 14px;
  border-right: 2px solid #333;
  border-top-right-radius: 5px;
}

.watch-tabs .on {
  background: #000;
  color: #fff;
  font-weight: bold;
  border-radius: 5px 5px 0 0;
}

.watch-list {
  width: 100%;
  table-layout: fixed;
  border-spacing: 0;
}

.watch-list th {
  height: 21px;
  padding: 3px 6px 0 5px;
  text-align: left;
  font-weight: normal;
  background: #f0f0f0;
  border-bottom: 1px solid #999;
}

.watch-list th:first-child {
  width: 25px;
}

.watch-list th.sym {
  width: 66px;
  font-weight: bold;
  border-right: 1px solid #999;
}

.watch-list th:last-child {
  padding-left: 6px;
}

.watch-list td {
  height: 21px;
  padding: 0 6px;
  line-height: 18px;
  white-space: nowrap;
  overflow: hidden;
  border-bottom: 1px solid #ddd;
}

.watch-list tbody td:first-child {
  background: #f0efee;
  border-right: 1px solid #999;
  border-bottom: 1px solid #999;
  padding: 0 3px 0 0;
}

.watch-list tbody .cur {
  background: #fff;
  text-align: right;
}

.watch-list .cur svg {
  vertical-align: middle;
}

.watch-list .blank td {
  height: 22px;
  background: #f0f0f0;
  border-bottom: 1px solid #999;
}

.watch-status {
  margin: auto 0 0;
  padding: 0 7px;
  font-size: 13px;
  line-height: 18px;
  color: #444;
}

.watch-foot {
  height: 29px;
  display: flex;
  align-items: flex-end;
  flex: none;
  background: #f0f0f0;
  border-top: 1px solid #777;
  padding-left: 6px;
  font-size: 16px;
}

.watch-foot button {
  height: 24px;
}

.watch-foot .notes {
  width: 77px;
  background: #a0a0a0;
  padding-left: 6px;
  gap: 3px;
}

.watch-foot .more {
  padding: 0 9px 0 8px;
  border-right: 1px solid #999;
}

.watch-foot .news {
  margin-left: 12px;
  gap: 4px;
}

.watch-foot .link {
  margin-left: 20px;
}

/* excel window */
.excel {
  flex: 1;
  min-width: 0;
  display: flex;
  flex-direction: column;
  position: relative;
  background: #f3f2f1;
  border-left: 1px solid #555;
  border-right: 2px solid #555;
  box-shadow: 0 0 14px rgba(0, 0, 0, 0.45);
}

.bookmarks {
  height: 22px;
  flex: none;
  display: flex;
  align-items: flex-end;
  padding: 0 17px 11px 18px;
  gap: 20px;
  overflow: hidden;
  background: #fff;
  font-size: 14px;
  line-height: 20px;
  white-space: nowrap;
}

.bookmarks a {
  display: flex;
  align-items: center;
  gap: 10px;
  flex: none;
}

.bookmarks .overflow {
  margin-left: auto;
  font-size: 18px;
}

.bookmarks .sep {
  padding-left: 14px;
  border-left: 1px solid #ccc;
  margin-left: -6px;
}

.logo51 {
  font-size: 14px;
  font-weight: bold;
  fill: #fff;
}

.titlebar {
  height: 48px;
  flex: none;
  display: grid;
  grid-template-columns: 1fr 469px 1fr;
  align-items: center;
  padding: 0 7px;
  background: #257f46;
  color: #fff;
  border-top: 1px solid #1b6b38;
}

.doc {
  display: flex;
  align-items: center;
  padding-left: 8px;
}

.doc strong {
  margin-left: 24px;
  font-size: 14px;
  font-weight: 700;
}

.filename {
  margin-left: 22px;
  gap: 18px;
}

.search {
  height: 32px;
  display: flex;
  align-items: center;
  gap: 12px;
  padding-left: 18px;
  background: #c8d8cd;
  border-radius: 3px;
}

.search input {
  flex: 1;
}

.search input::placeholder {
  color: #2f7d52;
  opacity: 1;
}

.account {
  display: flex;
  justify-content: flex-end;
  align-items: center;
  gap: 23px;
}

.avatar {
  width: 32px;
  height: 32px;
  justify-content: center;
  border: 1px solid #fff;
  border-radius: 50%;
  font-size: 12px;
  font-weight: 600;
}

.tabs {
  height: 36px;
  flex: none;
  display: flex;
  align-items: center;
  gap: 32px;
  padding: 0 7px 0 23px;
  line-height: 20px;
  white-space: nowrap;
}

.tabs a {
  padding-bottom: 2px;
  border-bottom: 2px solid transparent;
}

.tabs .file {
  margin-right: 6px;
}

.tabs .active {
  font-weight: 600;
  border-bottom-color: #217346;
}

.tabs .desktop {
  margin-left: 12px;
  padding: 2px 0 0;
}

.tabs button {
  height: 27px;
  gap: 5px;
  border: 1px solid #c8c6c4;
  border-radius: 2px;
  background: #fff;
  color: #217346;
}

.tabs .mode {
  margin-left: -4px;
  padding: 0 7px;
  gap: 6px;
  font-weight: 600;
}

.tab-actions {
  margin-left: auto;
  display: flex;
  gap: 8px;
}

.tabs .share {
  padding: 0 9px;
  background: #257f46;
  border-color: #257f46;
  color: #fff;
  font-weight: 700;
}

.tabs .comments {
  padding: 0 8px;
}

/* ribbon */
.ribbon {
  height: 92px;
  flex: none;
  display: flex;
  font-size: 11px;
  border-bottom: 1px solid #d2d0ce;
}

.group {
  flex: none;
  display: flex;
  flex-direction: column;
  border-right: 1px solid #c8c6c4;
  margin-bottom: 2px;
}

.group .body {
  flex: 1;
  display: flex;
  padding-top: 4px;
}

.group .col {
  flex-direction: column;
}

.group .name {
  text-align: center;
  font-size: 10px;
  line-height: 10px;
  color: #777;
}

.g-undo { width: 41px; }
.g-clip { width: 167px; }
.g-font { width: 245px; }
.g-align { width: 223px; }
.g-num { width: 147px; }
.g-tables { width: 191px; }
.g-cells { width: 138px; }
.g-edit { width: 199px; }
.g-analysis { width: 62px; }

.g-undo .body {
  align-items: center;
  padding-top: 13px;
  gap: 10px;
}

.big {
  flex-direction: column;
  align-self: flex-start;
  line-height: 15px;
}

.big > svg:first-child {
  margin-bottom: 1px;
}

.big > svg:last-child {
  margin-top: 4px;
}

.big span {
  display: flex;
  align-items: center;
}

.g-clip .big {
  margin: 0 9px 0 14px;
}

.w80 { width: 78px; margin-left: 7px; }
.w54 { width: 56px; }
.w42 { width: 42px; }
.w40 { width: 40px; }
.w46 { width: 46px; }

.g-cells .body {
  padding-left: 8px;
}

.list {
  display: flex;
  flex-direction: column;
}

.list button {
  height: 24px;
  gap: 4px;
}

.g-clip .list {
  margin-top: -4px;
}

.g-edit .list {
  margin: -4px 6px 0 13px;
}

.g-edit .list button {
  gap: 5px;
}

.g-analysis .body {
  justify-content: center;
  padding-top: 0;
}

.pick {
  height: 23px;
  display: flex;
  align-items: center;
  border: 1px solid #777;
  background: #fff;
  padding: 0 2px 0 5px;
}

.pick select {
  flex: 1;
  appearance: none;
}

.font { width: 128px; }
.size { width: 51px; border-left: none; }
.number { width: 128px; }

.line {
  display: flex;
  align-items: center;
}

.g-font .body {
  padding: 13px 0 0 9px;
  gap: 4px;
}

.g-num .body {
  padding: 13px 0 0 8px;
  gap: 4px;
}

.grow, .shrink {
  margin-left: 8px;
  font-size: 17px;
  line-height: 22px;
  align-items: flex-start;
}

.shrink {
  font-size: 15px;
}

.marks button {
  width: 24px;
  height: 23px;
  justify-content: center;
  font-size: 14px;
}

.marks .bold {
  background: #dedddc;
  font-weight: bold;
}

.marks .ital {
  font-family: "Liberation Serif", serif;
  font-style: italic;
}

.marks .und {
  text-decoration: underline;
}

.marks .dund {
  text-decoration: underline double;
}

.marks .strike {
  font-size: 12px;
  text-decoration: line-through;
}

.marks button[aria-label] {
  width: 34px;
  gap: 3px;
}

.aligns {
  display: grid;
  grid-template-columns: repeat(3, 24px);
  grid-template-rows: repeat(3, 24px);
  margin: -4px 4px 0 8px;
}

.aligns button {
  justify-content: center;
}

.aligns .on {
  background: #dedddc;
}

.wrap {
  gap: 4px;
  padding: 8px 0 0 8px;
  border-left: 1px solid #c8c6c4;
}

.tiny {
  font-size: 9px;
  fill: #333;
}

.nums {
  gap: 8px;
  padding-left: 7px;
}

.nums button {
  height: 23px;
  font-size: 18px;
  gap: 6px;
}

.nums .comma {
  margin: 0 4px;
}

.collapse {
  margin-left: auto;
  align-self: flex-end;
  padding: 0 4px 4px 0;
}

/* formula bar */
.formula {
  flex: none;
  display: flex;
  gap: 4px;
  padding: 4px 4px 7px 4px;
  background: #f4f4f4;
}

.namebox {
  width: 121px;
  height: 24px;
  display: flex;
  align-items: center;
  padding: 0 2px 0 3px;
  background: #fff;
  border: 1px solid #e1dfdd;
}

.namebox input {
  flex: 1;
  font-size: 12px;
}

.fx {
  width: 29px;
  justify-content: center;
  margin-left: 3px;
  background: #fff;
  border: 1px solid #e1dfdd;
  font-family: "Liberation Serif", serif;
  font-size: 15px;
  font-style: italic;
}

.fbar {
  flex: 1;
  padding-left: 4px;
  font-size: 12px;
  background: #fff;
  border: 1px solid #e1dfdd;
}

/* worksheet */
.sheet-wrap {
  flex: 1;
  min-height: 0;
  display: flex;
  overflow: hidden;
}

.sheet {
  flex: 1;
  width: 0;
  align-self: flex-start;
  table-layout: fixed;
  border-spacing: 0;
  background: #fff;
  font-family: Lato, Carlito, Calibri, sans-serif;
  font-size: 23px;
  line-height: 28px;
  color: #222;
}

.c-row { width: 37px; }
.c-c { width: 90px; }
.c-d { width: 130px; }
.c-e { width: 73px; }
.c-f { width: 134px; }
.c-g { width: 132px; }
.c-h { width: 133px; }
.c-i { width: 193px; }
.c-j { width: 139px; }
.c-k { width: 205px; }
.c-l { width: 171px; }
.c-m { width: 216px; }
.c-n { width: 127px; }
.c-o { width: 105px; }
.c-p { width: 237px; }

.sheet th {
  font-family: "Open Sans", sans-serif;
  font-size: 14px;
  font-weight: normal;
  line-height: 16px;
  color: #666;
  background: #f4f4f4;
  padding: 0;
}

.sheet thead th {
  height: 19px;
  border-right: 1px solid #d4d4d4;
  border-bottom: 1px solid #ababab;
}

.sheet thead .corner {
  text-align: right;
  border-right: none;
  padding-right: 3px;
  line-height: 0;
}

.sheet thead .cut {
  text-align: left;
  padding-left: 1px;
}

.sheet thead .sel {
  background: #d6d6d6;
  color: #217346;
  font-weight: 600;
  border-bottom: 2px solid #217346;
}

.sheet tbody th {
  vertical-align: bottom;
  padding-bottom: 2px;
  border-bottom: 1px solid #ddd;
}

.sheet tbody th.sel {
  background: #d6d6d6;
  color: #217346;
  border-right: 2px solid #217346;
}

.sheet tbody th.last {
  border-bottom: none;
}

.sheet tr { height: 35px; }
.sheet thead tr { height: 19px; }
.sheet .h33 { height: 33px; }
.sheet .h34 { height: 34px; }
.sheet .h36 { height: 36px; }
.sheet .h38, .trades tr { height: 38px; }
.sheet .h51 { height: 51px; }
.sheet .h58 { height: 58px; }

.sheet td {
  vertical-align: bottom;
  padding: 0 4px 2px 4px;
  white-space: nowrap;
  overflow: hidden;
  border-right: 1px solid #d4d4d4;
  border-bottom: 1px solid #d4d4d4;
}

.top td {
  font-size: 24px;
}

.heads td, .trades td, .setups td {
  font-weight: bold;
  color: #111;
}

.sheet .r, .trades td {
  text-align: right;
}

.sheet .in10 { padding-left: 9px; }
.sheet .in11 { padding-right: 10px; }
.sheet .in17 { padding-left: 16px; }

.money {
  display: flex;
  justify-content: space-between;
  padding: 0 10px 0 6px;
}

.clip {
  display: flex;
  justify-content: flex-end;
  overflow: hidden;
}

.trades td:nth-child(2) {
  padding-left: 0;
}

.trades td:nth-child(6), .trades td:nth-child(15) {
  text-align: left;
}

.trades td:nth-child(7), .sheet .serif {
  font-family: "Liberation Serif", "Times New Roman", serif;
  font-size: 26px;
  font-weight: normal;
  color: #000;
  padding-bottom: 1px;
}

.trades td:nth-child(9), .trades td:nth-child(12), .ipt td:nth-child(13) {
  padding-right: 10px;
}

.trades td.neg {
  padding-right: 4px;
  color: #f00;
}

.open td:not(:last-child) {
  background: #ffff33;
  border-color: #ffff33;
}

.open.nodate td:nth-child(2) {
  background: #fff;
  border-color: #d4d4d4;
}

.open td.raise:not(:last-child) {
  background: #fbbd2a;
  border-color: #fbbd2a;
}

.sheet .active-cell {
  position: relative;
  overflow: visible;
  outline: 2px solid #217346;
  outline-offset: -1px;
}

.active-cell::after {
  content: "";
  position: absolute;
  right: -3px;
  bottom: -3px;
  width: 6px;
  height: 6px;
  background: #217346;
  border: 1px solid #fff;
}

.cursor {
  position: absolute;
  right: -15px;
  top: 9px;
  z-index: 1;
}

.sheet .total {
  border-top: 2px solid #111;
  border-bottom: 5px double #111;
  padding-bottom: 0;
}

.sheet .larger {
  font-size: 26px;
}

.setups td {
  background: #fbbd2a;
  border-color: #fbbd2a;
}

.scroll {
  width: 12px;
  flex: none;
  background: #e6e6e6;
}

.scroll button {
  width: 12px;
  height: 21px;
  justify-content: center;
  background: #fff;
  border: 1px solid #bbb;
}

.thumb {
  height: 74px;
  background: #fff;
  border: 1px solid #bbb;
}
```
